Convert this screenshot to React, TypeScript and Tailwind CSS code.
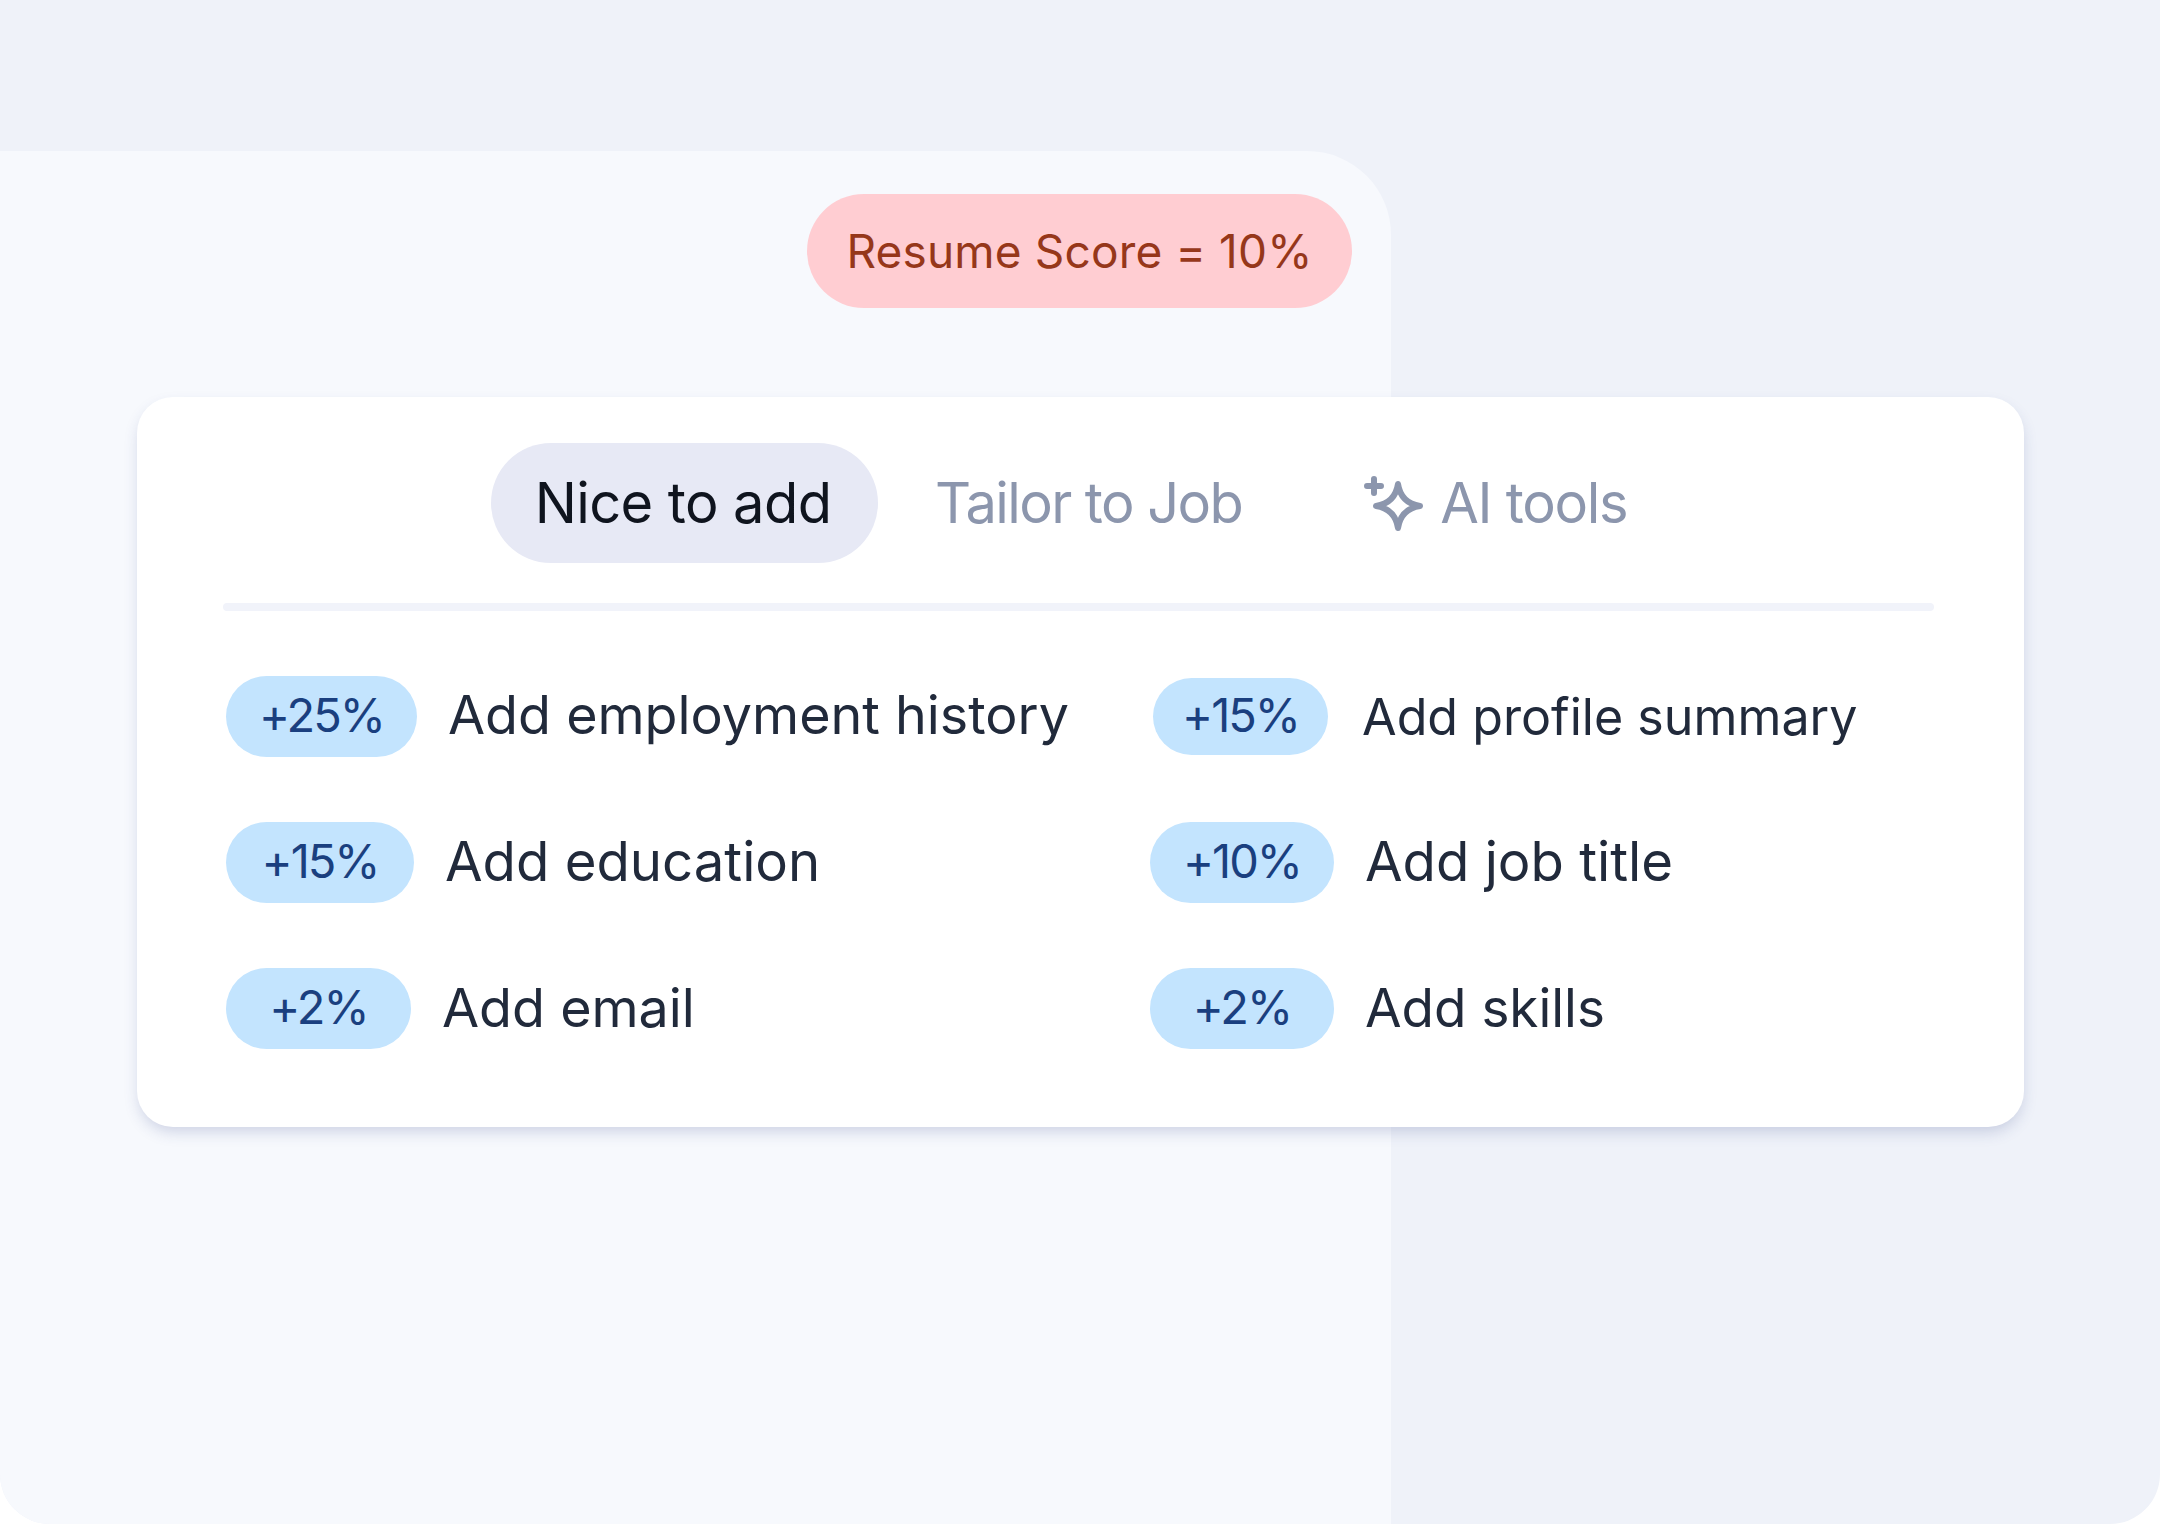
import React from 'react';

interface ScoreItem {
  score: string;
  label: string;
  badgeClass: string;
  labelClass: string;
}

const leftItems: ScoreItem[] = [
  { score: '+25%', label: 'Add employment history', badgeClass: 'w-[191px] h-[81px]', labelClass: 'ml-[31px] pb-[2px] text-[53.8px]' },
  { score: '+15%', label: 'Add education', badgeClass: 'w-[188px] h-[81px]', labelClass: 'ml-[31px] pb-[1px] text-[54.5px]' },
  { score: '+2%', label: 'Add email', badgeClass: 'w-[185px] h-[81px]', labelClass: 'ml-[31px] text-[53.8px]' },
];

const rightItems: ScoreItem[] = [
  { score: '+15%', label: 'Add profile summary', badgeClass: 'w-[175px] h-[77px] ml-[3px]', labelClass: 'ml-[34px] text-[50.2px]' },
  { score: '+10%', label: 'Add job title', badgeClass: 'w-[184px] h-[81px]', labelClass: 'ml-[31px] pb-[1px] text-[54.5px]' },
  { score: '+2%', label: 'Add skills', badgeClass: 'w-[184px] h-[81px]', labelClass: 'ml-[31px] text-[53px]' },
];

const SparkleIcon = () => (
  <svg width="60" height="60" viewBox="0 0 60 60" fill="none" stroke="#8c96ad" strokeWidth="6" strokeLinecap="round" strokeLinejoin="round" className="mt-[6px]">
    {/* Big four point star */}
    <path d="M34 8 C36 21 43 28 56 30 C43 32 36 39 34 52 C32 39 25 32 12 30 C25 28 32 21 34 8 Z" />
    {/* Small plus */}
    <path d="M10 3 V17 M3 10 H17" />
  </svg>
);

const ScoreRow = ({ item }: { item: ScoreItem }) => (
  <div className="flex items-center h-[81px]">
    <span className={`flex items-center justify-center pb-[3px] rounded-full bg-[#c3e4fe] text-[#1a3f7f] text-[47px] tracking-[-2px] ${item.badgeClass}`}>
      {item.score}
    </span>
    <span className={`text-[#212a3b] whitespace-nowrap ${item.labelClass}`}>{item.label}</span>
  </div>
);

export default function App() {
  return (
    <div className="w-[2160px] h-[1524px] overflow-hidden rounded-b-[50px] bg-[#eff2f9] pt-[151px] font-['Inter',sans-serif]">
      <div className="w-[1391px] h-[1373px] rounded-tr-[84px] bg-[#f7f9fd] pt-[43px]">
        {/* Score pill */}
        <div className="ml-[807px] flex items-center justify-center w-[545px] h-[114px] rounded-full bg-[#ffcdd2] text-[#96371a] text-[46px] tracking-[0.15px] whitespace-nowrap">
          Resume Score = 10%
        </div>

        {/* Card */}
        <div className="ml-[137px] mt-[89px] w-[1887px] h-[730px] rounded-[36px] bg-white pt-[46px] pl-[86px] pr-[90px] shadow-[0_7px_16px_-3px_rgba(40,60,130,0.22)]">
          <div className="flex items-center pl-[268px] text-[56px] whitespace-nowrap">
            <div className="flex items-center justify-center w-[387px] h-[120px] pr-[3px] rounded-full bg-[#e7e9f5] text-[#0f141e] tracking-[-0.6px]">
              Nice to add
            </div>
            <div className="pl-[57px] text-[#8c96ad] tracking-[-1.6px]">Tailor to Job</div>
            <div className="flex items-center pl-[122px] text-[#8c96ad] tracking-[-1.3px]">
              <SparkleIcon />
              <span className="ml-[16px]">AI tools</span>
            </div>
          </div>

          <div className="mt-[40px] h-[8px] rounded-full bg-[#f1f3fa]" />

          <div className="flex mt-[65px] pl-[3px]">
            <div className="flex flex-col gap-[65px] w-[924px]">
              {leftItems.map((item) => (
                <ScoreRow key={item.label} item={item} />
              ))}
            </div>
            <div className="flex flex-col gap-[65px]">
              {rightItems.map((item) => (
                <ScoreRow key={item.label} item={item} />
              ))}
            </div>
          </div>
        </div>
      </div>
    </div>
  );
}
